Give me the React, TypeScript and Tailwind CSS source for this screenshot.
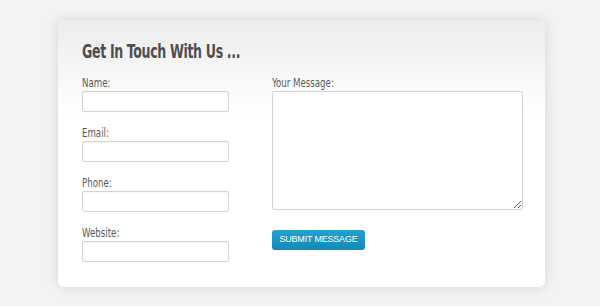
export default function App() {
  const fields = ["Name:", "Email:", "Phone:", "Website:"]
  const cond = "font-['DejaVu_Sans_Condensed','Liberation_Sans_Narrow','Liberation_Sans',sans-serif] [font-stretch:condensed]"
  return (
    <div className="w-[600px] h-[306px] bg-[#f3f3f3] pt-[20px] pl-[58px]">
      <div className="w-[487px] h-[267px] rounded-[6px] bg-gradient-to-b from-[#ececec] to-white to-[35%] shadow-[0_0_14px_rgba(0,0,0,0.12)] pl-[24px] pt-[19px]">
        <h2 className={`${cond} font-bold text-[20px] leading-[24px] text-[#4e4e4e] tracking-[-0.5px] scale-x-[0.7] origin-left`}>
          Get In Touch With Us ...
        </h2>
        <div className="flex mt-[13px]">
          <div className="w-[190px] flex flex-col gap-[14px]">
            {fields.map((f) => (
              <div key={f} className="flex flex-col">
                <label className={`${cond} text-[12px] leading-[14px] text-[#5a5a5a] scale-x-[0.8] origin-left h-[14px]`}>{f}</label>
                <input className="mt-[1px] w-[147px] h-[21px] bg-white border border-[#d3d3d3] rounded-[2px] shadow-[inset_0_1px_2px_rgba(0,0,0,0.05)]" />
              </div>
            ))}
          </div>
          <div className="flex flex-col">
            <label className={`${cond} text-[12px] leading-[14px] text-[#5a5a5a] scale-x-[0.8] origin-left h-[14px]`}>Your Message:</label>
            <textarea className="mt-[1px] w-[251px] h-[119px] bg-white border border-[#d3d3d3] rounded-[2px] resize" />
            <button className="mt-[20px] w-[93px] h-[20px] rounded-[3px] bg-gradient-to-b from-[#22a3d0] to-[#1687b3] text-white text-[9px] font-['Liberation_Sans',sans-serif] tracking-[-0.2px]">
              SUBMIT MESSAGE
            </button>
          </div>
        </div>
      </div>
    </div>
  )
}
